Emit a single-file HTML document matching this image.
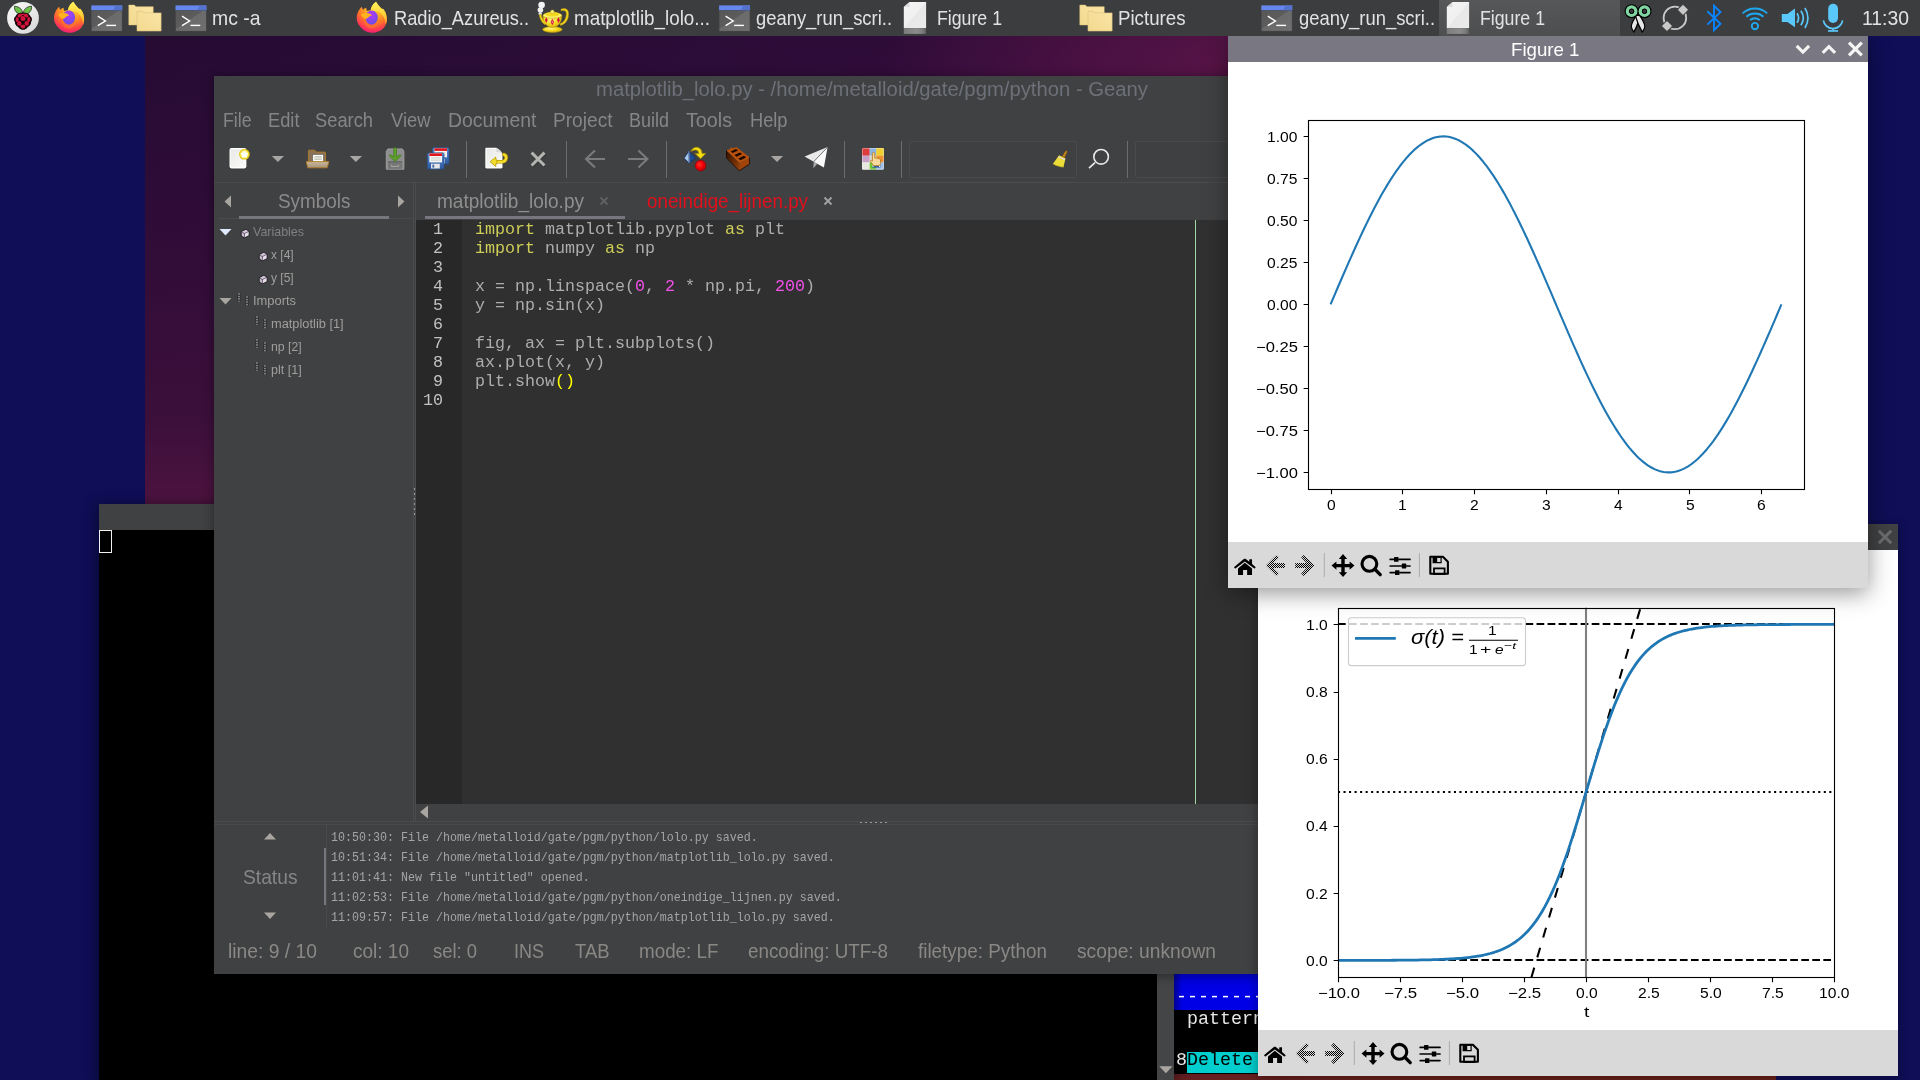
<!DOCTYPE html>
<html><head><meta charset="utf-8"><title>desktop</title>
<style>
*{box-sizing:border-box;margin:0;padding:0}
html,body{width:1920px;height:1080px;overflow:hidden;background:#0f0e57;font-family:"Liberation Sans",sans-serif}
.a{position:absolute}
.t{position:absolute;white-space:pre;transform-origin:0 0;display:block}
svg{position:absolute;overflow:visible}
#wall{left:145px;top:36px;width:1631px;height:1044px;
 background:
  radial-gradient(ellipse 380px 150px at 1120px 30px, rgba(112,24,80,.7), rgba(112,24,80,0) 100%),
  linear-gradient(90deg, rgba(60,14,80,0) 0px, rgba(70,16,80,.12) 500px, rgba(84,18,76,.25) 900px, rgba(80,18,80,0) 1300px),
  linear-gradient(180deg,#260b33 0px,#2d0c37 150px,#3b0f3a 380px,#4d1340 470px,#561440 700px,#5e1c1c 1030px,#6a2218 1044px);}
#tb{left:0;top:0;width:1920px;height:36px;background:#3c3d3f}
</style></head><body>
<div id="root" class="a" style="left:0;top:0;width:1920px;height:1080px;will-change:transform;overflow:hidden">
<div id="wall" class="a"></div>
<svg width="0" height="0" style="left:0;top:0">
<defs>
<pattern id="dith" width="2" height="2" patternUnits="userSpaceOnUse"><rect width="1" height="1" fill="#000"/><rect x="1" y="1" width="1" height="1" fill="#000"/></pattern>
<g id="mpltb">
 <!-- home -->
 <path d="M16.84 16.7c.4 0 .7.2 1 .4l3.400 2.700V17.700c0-.3.200-.5.500-.5h1.800c.3 0 .5.200.5.500v4.400l3.200 2.600c.5.400.3.900 0 1.300-.4.500-.9.500-1.300.2L16.840 19.400 7.800 26.200c-.4.300-.9.300-1.300-.2-.3-.4-.5-.9 0-1.300l9.300-7.600c.3-.2.600-.4 1.040-.4z" fill="#000"/>
 <path d="M16.84 20.800l6.900 5.500c.2.200.3.300.3.600v5.500c0 .4-.3.700-.7.700h-4.200v-5h-4.100v5H10.700c-.4 0-.7-.3-.7-.7v-5.500c0-.3.100-.4.300-.6z" fill="#000"/>
 <!-- back -->
 <path d="M37.9 23.4L48.5 12.9l2.500 2.500-5.500 5.500H57v5H45.500l5.500 5.500-2.500 2.500z" fill="url(#dith)"/>
 <!-- forward -->
 <path d="M86.300 23.400L75.700 12.900l-2.500 2.500 5.500 5.500H67.200v5h11.500l-5.500 5.500 2.500 2.500z" fill="url(#dith)"/>
 <rect x="95.8" y="11" width="1" height="24" fill="#ababab"/>
 <!-- pan -->
 <path d="M115 12.1l4.2 4.9h-2.5v4.9h4.9v-2.5l4.9 4.2-4.9 4.2v-2.5h-4.9v4.9h2.5l-4.2 4.9-4.2-4.9h2.5v-4.9h-4.9v2.5l-4.9-4.2 4.9-4.2v2.5h4.9v-4.9h-2.5z" fill="#000"/>
 <!-- zoom -->
 <circle cx="141.4" cy="21.8" r="7.4" fill="none" stroke="#000" stroke-width="3.1"/>
 <path d="M146.9 27.3l5.3 5.3" stroke="#000" stroke-width="3.4" stroke-linecap="round"/>
 <!-- sliders -->
 <path d="M162.2 17.4h3.3m5.4 0h11.1M162.2 24h11.1m5.5 0h3.2M162.2 30.6h4.3m5.5 0h10" stroke="#000" stroke-width="1.7" fill="none" stroke-linecap="round"/>
 <rect x="166" y="15" width="4.5" height="4.8" rx=".6" fill="#000"/><rect x="173.8" y="21.6" width="4.5" height="4.8" rx=".6" fill="#000"/><rect x="167" y="28.2" width="4.5" height="4.8" rx=".6" fill="#000"/>
 <rect x="190.9" y="11" width="1" height="24" fill="#ababab"/>
 <!-- save -->
 <path d="M202.3 14.8h12.6l5 5v12h-17.6z" fill="none" stroke="#000" stroke-width="2.1" stroke-linejoin="round"/>
 <path d="M204.6 14.8h9.1v6.5h-9.1zM209.2 15.7v4.2h3.3v-4.2z" fill="#000" fill-rule="evenodd"/>
 <rect x="206" y="26.4" width="10.6" height="5.6" fill="none" stroke="#000" stroke-width="1.8"/>
</g>
</defs></svg>
<svg width="0" height="0" style="left:0;top:0">
<defs>
<linearGradient id="gcirc" x1="0" y1="0" x2="1" y2="1"><stop offset="0" stop-color="#f6f6f6"/><stop offset=".5" stop-color="#ebebeb"/><stop offset="1" stop-color="#d4d4d4"/></linearGradient>
<radialGradient id="ffbody" cx=".6" cy=".12" r="1"><stop offset="0" stop-color="#ffe14a"/><stop offset=".3" stop-color="#ffb029"/><stop offset=".55" stop-color="#ff7a26"/><stop offset=".76" stop-color="#ff3d4e"/><stop offset=".95" stop-color="#f0108a"/></radialGradient>
<radialGradient id="ffglobe" cx=".45" cy=".3" r=".8"><stop offset="0" stop-color="#b43cf0"/><stop offset=".5" stop-color="#8a45f0"/><stop offset="1" stop-color="#5b52e0"/></radialGradient>
<linearGradient id="ffflame" x1="0" y1="0" x2="0" y2="1"><stop offset="0" stop-color="#fff45e"/><stop offset=".55" stop-color="#ffd23a"/><stop offset="1" stop-color="#ff9a24"/></linearGradient>
<linearGradient id="gterm" x1="0" y1="0" x2="1" y2="1"><stop offset="0" stop-color="#585858"/><stop offset=".44" stop-color="#5c5c5c"/><stop offset=".45" stop-color="#6b6b6b"/><stop offset="1" stop-color="#6f6f6f"/></linearGradient>
<linearGradient id="gfold" x1="0" y1="1" x2="1" y2="0"><stop offset="0" stop-color="#f3d98f"/><stop offset="1" stop-color="#fae5a6"/></linearGradient>
<linearGradient id="gdocrefl" x1="0" y1="0" x2="1" y2="0"><stop offset="0" stop-color="#7c7c7c"/><stop offset=".6" stop-color="#8c8c8c"/><stop offset=".85" stop-color="#7a7a7a"/><stop offset="1" stop-color="#5c5d5e"/></linearGradient>
<linearGradient id="gdoc" x1="0" y1="0" x2="1" y2="1"><stop offset="0" stop-color="#f4f4f4"/><stop offset=".5" stop-color="#f0f0f0"/><stop offset=".51" stop-color="#e8e8e8"/><stop offset="1" stop-color="#ebebeb"/></linearGradient>
<radialGradient id="ggold" cx=".4" cy=".35" r=".75"><stop offset="0" stop-color="#fff689"/><stop offset=".5" stop-color="#f5d91e"/><stop offset="1" stop-color="#c9a30c"/></radialGradient>

<!-- raspberry menu: 36x36 box, circle centre 18,18 (placed so centre at 23,18) -->
<g id="i-rpi">
 <circle cx="18" cy="18" r="15.9" fill="url(#gcirc)"/>
 <path d="M17.700 13.400C17.400 9.500 14.600 6.700 9.500 6.300 9 10.600 11.500 13.900 16.200 14.200z" fill="#6cc04a" stroke="#1a1a1a" stroke-width=".7"/>
 <path d="M18.300 13.400C18.600 9.500 21.400 6.700 26.500 6.300 27 10.600 24.500 13.900 19.800 14.200z" fill="#6cc04a" stroke="#1a1a1a" stroke-width=".7"/>
 <path d="M18 12.600c4.200 0 6.700 1.700 7.400 3.700 1.900 1.300 2.100 4 .7 5.800.1 2.300-1.500 4.200-3.300 4.900-1 1.700-3 2.900-4.800 2.900s-3.800-1.200-4.800-2.900c-1.800-.7-3.400-2.600-3.300-4.900-1.400-1.800-1.200-4.500.7-5.800.7-2 3.200-3.700 7.400-3.700z" fill="#14060a"/>
 <g fill="#d2143c">
  <ellipse cx="14.800" cy="15.600" rx="2.400" ry="1.700" transform="rotate(-25 14.800 15.600)"/><ellipse cx="21.200" cy="15.600" rx="2.400" ry="1.700" transform="rotate(25 21.200 15.600)"/>
  <circle cx="18" cy="18.600" r="2.500"/>
  <ellipse cx="12.200" cy="19.700" rx="1.600" ry="2.500"/><ellipse cx="23.800" cy="19.700" rx="1.600" ry="2.500"/>
  <ellipse cx="14.300" cy="23.500" rx="2.200" ry="2.400"/><ellipse cx="21.700" cy="23.500" rx="2.200" ry="2.400"/>
  <ellipse cx="18" cy="26.700" rx="2.400" ry="2"/>
  <ellipse cx="18" cy="14.500" rx="1.300" ry=".9"/>
 </g>
</g>

<!-- firefox: 32x32, origin top-left of icon bbox (x 54..84, y 2..33) -->
<g id="i-ff">
 <path d="M19.500 -.2C21 2.600 23.500 5 25.500 7l.9-.2C28 8.200 29.800 11.500 30.200 15.300 30.600 19 30 21 29.200 22.700 27.500 26.500 25 28 22.900 29 20 30.500 17.500 30.900 14.900 30.800 11 30.600 8 29 6.200 27.300 2.500 24 .3 20.500 .2 16.700 .1 14 .6 12 1.500 10 2.400 8 3.800 6.200 5.400 4.800 5.600 6 6 7 6.500 7.800 7.400 6.900 8.500 6.200 9.700 5.800 9.800 7 10.100 8.100 10.500 9 12 8.400 13.500 8 14.400 8.200V7C15 4.500 17 1.500 19.500 -.2z" fill="url(#ffbody)"/>
 <path d="M19.500 -.2C21 2.600 23.500 5 25.500 7l.9-.2C28 8.200 29.800 11.500 30.200 15.300 30.500 18.500 30 21 29.200 22.700 29 18 27 13.500 24 11 22.500 9.700 20.500 9 19.500 9.300 18 8.400 16 8 14.400 8.200V7C15 4.500 17 1.500 19.500 -.2z" fill="url(#ffflame)"/>
 <ellipse cx="15.100" cy="15.600" rx="6.200" ry="7.100" fill="url(#ffglobe)"/>
 <path d="M4.200 12.700C6 11.200 9 10.700 11 11.300 12.500 10.800 14 11.800 15.400 13.500 13.800 13.600 12.600 14.400 12 15.300 10.800 16.200 9.800 16.900 8.900 16.900 7 16.500 5.500 14 4.200 12.700z" fill="#ffb21e"/>
 <path d="M8.700 16.900c.3 3.700 3.100 6.300 6.700 6.300 3.200 0 5.900-2.100 6.700-5.200.6 4.200-2.300 8.600-7.300 8.600-4.900 0-7.600-4.800-6.100-9.700z" fill="#ff7a2a" opacity=".55"/>
</g>

<!-- terminal: 32x26, origin at (x0, 5.400) -->
<g id="i-term">
 <rect x="0" y="0" width="31.500" height="26.100" rx="1" fill="#47474a"/>
 <rect x=".3" y="0" width="30.900" height="4.800" fill="#6587ee"/>
 <path d="M22 4.800L24.600 0h6.600v4.800z" fill="#5573cc"/>
 <rect x=".7" y="5.600" width="30.100" height="19.900" fill="url(#gterm)"/>
 <path d="M6.800 10.800l7.600 4.800-7.600 4.700" fill="none" stroke="#fff" stroke-width="1.400"/>
 <path d="M15.300 20h9.800" stroke="#fff" stroke-width="1.400"/>
</g>

<!-- folder: 33x26 origin (x0,5) -->
<g id="i-fold">
 <path d="M0 .1h5.600l1.500 1.600H24.400V19.900H0z" fill="url(#gfold)" stroke="#e3c77d" stroke-width=".5"/>
 <path d="M8.200 6.400h5.200l1.500 1.500H32.300V26H8.200z" fill="url(#gfold)" stroke="#dcc078" stroke-width=".6"/>
</g>

<!-- doc: 23x32 origin (x0, 1.900) -->
<g id="i-doc">
 <rect x="0" y="26.200" width="22.300" height="5.800" fill="url(#gdocrefl)"/>
 <path d="M5.700 0H22.300V26.200H0V5.100z" fill="url(#gdoc)"/>
 <path d="M5.700 0v5.100H0z" fill="#dcdcdc"/>
</g>

<!-- geany lamp: origin at (537,2), ~32x32 -->
<g id="i-lamp">
 <circle cx="4.600" cy="3.100" r="3.300" fill="#f4f4f4"/><circle cx="3.400" cy="8" r="2.800" fill="#efefef"/><circle cx="3.200" cy="11.800" r="1.700" fill="#e4e6f4"/>
 <path d="M2.200 12.600c.4 3.500 2 7.300 5.600 10.200l1.800-2.200c-3-1.700-4.900-4.600-5.600-8.300z" fill="#f1d41d" stroke="#b8960a" stroke-width=".5"/>
 <path d="M23.800 7.300c3.400-1.800 7.400-.6 7.700 3.400.4 6.200-2.300 11.200-8 12.700l-.5-1.700c4.400-1.500 6.300-5.800 6.300-10.300 0-2.600-2.400-3.400-4.900-2.400z" fill="#f1d41d" stroke="#b8960a" stroke-width=".5"/>
 <ellipse cx="15.400" cy="27.500" rx="9.800" ry="2.900" fill="url(#ggold)" stroke="#b8960a" stroke-width=".5"/>
 <path d="M6 13.500c0 7 4 12 9.400 12s9.400-5 9.400-12z" fill="url(#ggold)" stroke="#b8960a" stroke-width=".5"/>
 <ellipse cx="15.400" cy="13.300" rx="9.400" ry="3" fill="#fff27a" stroke="#b8960a" stroke-width=".5"/>
 <ellipse cx="15.400" cy="12.300" rx="7" ry="2.300" fill="#f5d91e"/>
 <circle cx="15.400" cy="9.800" r="1.900" fill="#fff27a" stroke="#b8960a" stroke-width=".5"/>
 <path d="M9.300 15.300l1.500 2.800-1.500 2.800-1.400-2.800zM15.300 16.800l1.700 3.200-1.700 3.200-1.700-3.200zM21.500 15.300l1.400 2.800-1.400 2.800-1.500-2.800z" fill="#d4143c"/>
 <circle cx="15.300" cy="20" r=".7" fill="#ffc0d0"/>
</g>

<!-- tray icons (absolute page coords) -->
<g id="i-tray">
 <!-- clipit -->
 <path d="M1640.400 15.500L1636.500 15.200C1634 19 1631.200 23.200 1631.300 26.500c.1 1.800 1.300 3.600 2.500 5.600 1.500-2.600 2.900-5.400 3.700-8.100z" fill="#e6e6e6" stroke="#000" stroke-width="1.200" stroke-linejoin="round"/>
 <path d="M1635.700 15.500L1639.600 15.200C1642.100 19 1644.900 23.200 1644.800 26.500c-.1 1.800-1.300 3.600-2.500 5.600-2.400-4.200-4.900-9.400-6.200-14.100z" fill="#e6e6e6" stroke="#000" stroke-width="1.200" stroke-linejoin="round"/>
 <circle cx="1631.600" cy="11.200" r="4.300" fill="none" stroke="#000" stroke-width="5.400"/><circle cx="1644.500" cy="11.200" r="4.300" fill="none" stroke="#000" stroke-width="5.400"/>
 <circle cx="1631.600" cy="11.200" r="4.200" fill="none" stroke="#7fd4a0" stroke-width="3.400"/><circle cx="1644.500" cy="11.200" r="4.200" fill="none" stroke="#7fd4a0" stroke-width="3.400"/>
 <circle cx="1631.600" cy="11.200" r="2.200" fill="#3a3b3d" stroke="#000" stroke-width="1"/><circle cx="1644.500" cy="11.200" r="2.200" fill="#3a3b3d" stroke="#000" stroke-width="1"/>
 <!-- sync -->
 <circle cx="1674.900" cy="17.900" r="11.300" fill="none" stroke="#c9c9c9" stroke-width="1.800"/>
 <rect x="1678.900" y="5.700" width="8.200" height="8.200" rx="1.200" transform="rotate(45 1683 9.800)" fill="#c9c9c9" stroke="#3c3d3f" stroke-width="1"/>
 <rect x="1662.900" y="21.900" width="8.200" height="8.200" rx="1.200" transform="rotate(45 1667 26)" fill="#c9c9c9" stroke="#3c3d3f" stroke-width="1"/>
 <!-- bluetooth -->
 <path d="M1707.300 11.300l13.200 12.500-6.500 6.400V5.700l6.500 6.400-13.200 12.500" fill="none" stroke="#0a84ff" stroke-width="1.900" stroke-linejoin="miter"/>
 <!-- wifi -->
 <g fill="none" stroke="#1ea8f0" stroke-width="1.900" stroke-linecap="butt">
  <circle cx="1754.900" cy="26.100" r="3.200"/>
  <path d="M1742.600 13.400a18 18 0 0 1 24.600 0"/>
  <path d="M1746.300 16.700a13 13 0 0 1 17.200 0"/>
  <path d="M1750 20.100a8 8 0 0 1 9.800 0"/>
 </g>
 <!-- volume -->
 <path d="M1781.800 13.900h5.600l7.600-5.300v18.600l-7.600-5.300h-5.600z" fill="#5ac8fa"/>
 <g fill="none" stroke="#5ac8fa" stroke-width="1.700">
  <path d="M1797 13.300a8.400 8.400 0 0 1 0 9.400"/>
  <path d="M1800.900 10.700a13.100 13.100 0 0 1 0 14.600"/>
  <path d="M1804.900 8a18 18 0 0 1 0 20"/>
 </g>
 <!-- mic -->
 <rect x="1828.200" y="3.700" width="9.800" height="19.300" rx="4.900" fill="#5ac8fa"/>
 <path d="M1823.400 20.300a9.700 9.700 0 0 0 19.200 0" fill="none" stroke="#5ac8fa" stroke-width="1.700"/>
 <path d="M1833 28v2.600" stroke="#5ac8fa" stroke-width="1.700"/>
 <rect x="1828" y="30.100" width="10.100" height="1.700" fill="#5ac8fa"/>
</g>
</defs></svg>
<!-- terminal 1 (big black) -->
<div class="a" style="left:99px;top:504px;width:1075px;height:576px;background:#000;box-shadow:0 3px 14px 2px rgba(0,0,0,.45)">
 <div class="a" style="left:0;top:0;width:1075px;height:26px;background:#404142"></div>
 <div class="a" style="left:0;top:26px;width:13px;height:23px;border:1px solid #f2f2f2"></div>
 <div class="a" style="left:1058px;top:26px;width:17px;height:550px;background:#444546"></div>
 <svg style="left:1059.500px;top:562px" width="14" height="8" viewBox="0 0 14 8"><path d="M.3 .3h13.200L6.900 7.300z" fill="#a9a6a2"/></svg>
</div>
<!-- terminal 2 (mc) -->
<div class="a" style="left:1174px;top:940px;width:200px;height:134px;background:#000;overflow:hidden">
 <div class="a" style="left:0;top:0;width:200px;height:70px;background:#0000e6"></div>
 <div class="a" style="left:0;top:0;width:8px;height:70px;background:linear-gradient(90deg,rgba(0,0,40,.45),rgba(0,0,40,0))"></div>
 <span class="t" style="left:2.00px;top:49.45px;font:normal normal 18.33px/1 'Liberation Mono',monospace;color:#ffffff;transform:scaleX(0.9999);">----------------</span>
 <span class="t" style="left:2.00px;top:71.35px;font:normal normal 18.33px/1 'Liberation Mono',monospace;color:#e6e6e6;transform:scaleX(0.9999);"> pattern</span>
 <div class="a" style="left:13px;top:112px;width:187px;height:21px;background:#00cdcd"></div>
 <span class="t" style="left:2.00px;top:111.55px;font:normal normal 18.33px/1 'Liberation Mono',monospace;color:#e6e6e6;transform:scaleX(0.9999);">8</span>
 <span class="t" style="left:13.00px;top:111.55px;font:normal normal 18.33px/1 'Liberation Mono',monospace;color:#000000;transform:scaleX(0.9999);">Delete</span>
</div>
<!-- Geany window -->
<div class="a" style="left:214px;top:76px;width:1314px;height:898px;background:#404142;box-shadow:0 2px 10px 1px rgba(0,0,0,.35)"></div>
<span class="t" style="left:595.50px;top:79.37px;font:normal normal 20.00px/1 'Liberation Sans',sans-serif;color:#6d7078;transform:scaleX(1.0133);">matplotlib_lolo.py - /home/metalloid/gate/pgm/python - Geany</span>
<!-- menubar -->
<span class="t" style="left:222.50px;top:109.85px;font:normal normal 20.50px/1 'Liberation Sans',sans-serif;color:#858687;transform:scaleX(0.8628);">File</span>
<span class="t" style="left:267.50px;top:109.85px;font:normal normal 20.50px/1 'Liberation Sans',sans-serif;color:#858687;transform:scaleX(0.8917);">Edit</span>
<span class="t" style="left:315.00px;top:109.85px;font:normal normal 20.50px/1 'Liberation Sans',sans-serif;color:#858687;transform:scaleX(0.8929);">Search</span>
<span class="t" style="left:390.50px;top:109.85px;font:normal normal 20.50px/1 'Liberation Sans',sans-serif;color:#858687;transform:scaleX(0.8964);">View</span>
<span class="t" style="left:447.50px;top:109.85px;font:normal normal 20.50px/1 'Liberation Sans',sans-serif;color:#858687;transform:scaleX(0.9472);">Document</span>
<span class="t" style="left:552.50px;top:109.85px;font:normal normal 20.50px/1 'Liberation Sans',sans-serif;color:#858687;transform:scaleX(0.9325);">Project</span>
<span class="t" style="left:628.70px;top:109.85px;font:normal normal 20.50px/1 'Liberation Sans',sans-serif;color:#858687;transform:scaleX(0.8774);">Build</span>
<span class="t" style="left:686.00px;top:109.85px;font:normal normal 20.50px/1 'Liberation Sans',sans-serif;color:#858687;transform:scaleX(0.9612);">Tools</span>
<span class="t" style="left:749.50px;top:109.85px;font:normal normal 20.50px/1 'Liberation Sans',sans-serif;color:#858687;transform:scaleX(0.8894);">Help</span>
<!-- toolbar separators / entries -->
<div class="a" style="left:466px;top:141px;width:1px;height:37px;background:#6c6d6e"></div>
<div class="a" style="left:566px;top:141px;width:1px;height:37px;background:#6c6d6e"></div>
<div class="a" style="left:666px;top:141px;width:1px;height:37px;background:#6c6d6e"></div>
<div class="a" style="left:844px;top:141px;width:1px;height:37px;background:#6c6d6e"></div>
<div class="a" style="left:901px;top:141px;width:1px;height:37px;background:#6c6d6e"></div>
<div class="a" style="left:1127px;top:141px;width:1px;height:37px;background:#6c6d6e"></div>
<div class="a" style="left:909px;top:141px;width:168px;height:37px;border:1px solid #494a4b;border-radius:2px;background:#3f4041"></div>
<div class="a" style="left:1135px;top:141px;width:168px;height:37px;border:1px solid #494a4b;border-radius:2px;background:#3f4041"></div>
<div class="a" style="left:214px;top:182px;width:1314px;height:1px;background:#4a4b4c"></div>
<!-- sidebar -->
<div class="a" style="left:413px;top:183px;width:1px;height:638px;background:#4a4b4c"></div>
<div class="a" style="left:415px;top:183px;width:1px;height:638px;background:#4a4b4c"></div>
<div class="a" style="left:218px;top:218px;width:196px;height:1px;background:#4a4b4c"></div>
<span class="t" style="left:277.50px;top:190.22px;font:normal normal 21.00px/1 'Liberation Sans',sans-serif;color:#8b8b8b;transform:scaleX(0.9003);">Symbols</span>
<div class="a" style="left:239px;top:216px;width:150px;height:3px;background:#77767f"></div>
<svg style="left:224px;top:195px" width="8" height="13" viewBox="0 0 8 13"><path d="M7 0.5v12L0.5 6.5z" fill="#a9a6a2"/></svg>
<svg style="left:397px;top:195px" width="8" height="13" viewBox="0 0 8 13"><path d="M1 0.5v12l6.5-6z" fill="#a9a6a2"/></svg>
<!-- editor tabs -->
<span class="t" style="left:437.00px;top:190.22px;font:normal normal 21.00px/1 'Liberation Sans',sans-serif;color:#8f8f8f;transform:scaleX(0.9059);">matplotlib_lolo.py</span>
<div class="a" style="left:425px;top:216px;width:200px;height:3px;background:#77767f"></div>
<span class="t" style="left:647.00px;top:190.22px;font:normal normal 21.00px/1 'Liberation Sans',sans-serif;color:#e20f1c;transform:scaleX(0.8953);">oneindige_lijnen.py</span>
<svg style="left:599px;top:196px" width="10" height="10" viewBox="0 0 10 10"><path d="M1.5 1.5l7 7M8.5 1.5l-7 7" stroke="#606162" stroke-width="1.8" fill="none"/></svg>
<svg style="left:823px;top:196px" width="10" height="10" viewBox="0 0 10 10"><path d="M1.5 1.5l7 7M8.5 1.5l-7 7" stroke="#a3a3a3" stroke-width="1.8" fill="none"/></svg>
<!-- tree -->
<svg style="left:219px;top:228px" width="13" height="8" viewBox="0 0 13 8"><path d="M0.5 1h12l-6 6.5z" fill="#dfe9ff"/></svg>
<svg style="left:219px;top:297px" width="13" height="8" viewBox="0 0 13 8"><path d="M0.5 1h12l-6 6.5z" fill="#a9a6a2"/></svg>
<span class="t" style="left:253.00px;top:224.54px;font:normal normal 13.30px/1 'Liberation Sans',sans-serif;color:#808182;transform:scaleX(0.9364);">Variables</span>
<span class="t" style="left:271.30px;top:247.74px;font:normal normal 13.30px/1 'Liberation Sans',sans-serif;color:#a09f9d;transform:scaleX(0.9032);">x [4]</span>
<span class="t" style="left:271.30px;top:270.74px;font:normal normal 13.30px/1 'Liberation Sans',sans-serif;color:#a09f9d;transform:scaleX(0.9032);">y [5]</span>
<span class="t" style="left:253.00px;top:293.74px;font:normal normal 13.30px/1 'Liberation Sans',sans-serif;color:#a09f9d;transform:scaleX(0.9697);">Imports</span>
<span class="t" style="left:271.30px;top:316.74px;font:normal normal 13.30px/1 'Liberation Sans',sans-serif;color:#a09f9d;transform:scaleX(0.9641);">matplotlib [1]</span>
<span class="t" style="left:271.30px;top:339.74px;font:normal normal 13.30px/1 'Liberation Sans',sans-serif;color:#a09f9d;transform:scaleX(0.9226);">np [2]</span>
<span class="t" style="left:271.30px;top:362.74px;font:normal normal 13.30px/1 'Liberation Sans',sans-serif;color:#a09f9d;transform:scaleX(0.9438);">plt [1]</span>
<!-- editor -->
<div class="a" style="left:416px;top:220px;width:1112px;height:584px;background:#303030"></div>
<div class="a" style="left:416px;top:220px;width:46px;height:584px;background:#282828"></div>
<div class="a" style="left:1195px;top:220px;width:1px;height:584px;background:#9fd9a8"></div>
<pre class="a" id="ln" style="left:423px;top:220px;width:20px;text-align:right;font:16.667px/19px 'Liberation Mono',monospace;color:#c2c2c2;padding-top:0px">1
2
3
4
5
6
7
8
9
10</pre>
<pre class="a" id="code" style="left:475px;top:220px;font:16.667px/19px 'Liberation Mono',monospace;color:#adadad"><span class="k">import</span> matplotlib.pyplot <span class="k">as</span> plt
<span class="k">import</span> numpy <span class="k">as</span> np

x = np.linspace(<span class="n">0</span>, <span class="n">2</span> * np.pi, <span class="n">200</span>)
y = np.sin(x)

fig, ax = plt.subplots()
ax.plot(x, y)
plt.show<span class="b">()</span>
</pre>
<style>#code .k{color:#cdcd58}#code .n{color:#f450ea}#code .b{color:#ffff00}</style>
<!-- h scrollbar -->
<svg style="left:419px;top:805px" width="10" height="14" viewBox="0 0 10 14"><path d="M9 0.5v13L1 7z" fill="#a9a6a2"/></svg>
<div class="a" style="left:214px;top:821px;width:1314px;height:1px;background:#4a4b4c"></div>
<div class="a" style="left:860px;top:822px;width:28px;height:1px;background:repeating-linear-gradient(90deg,#9a9a9a 0 2px,transparent 2px 5px)"></div>
<div class="a" style="left:414px;top:488px;width:1px;height:28px;background:repeating-linear-gradient(180deg,#9a9a9a 0 2px,transparent 2px 5px)"></div>
<!-- messages -->
<div class="a" style="left:214px;top:824px;width:1314px;height:1px;background:#48494a"></div>
<svg style="left:263px;top:832px" width="14" height="8" viewBox="0 0 14 8"><path d="M1 7.5h12L7 1z" fill="#a9a6a2"/></svg>
<svg style="left:263px;top:912px" width="14" height="8" viewBox="0 0 14 8"><path d="M1 0.5h12L7 7z" fill="#a9a6a2"/></svg>
<span class="t" style="left:243.00px;top:865.92px;font:normal normal 21.00px/1 'Liberation Sans',sans-serif;color:#858687;transform:scaleX(0.9154);">Status</span>
<div class="a" style="left:324px;top:848px;width:3px;height:57px;background:#77767f"></div>
<div class="a" style="left:326px;top:824px;width:1px;height:104px;background:#4a4b4c"></div>
<pre class="a" id="msg" style="left:331px;top:828.4px;font:11.667px/18.52px 'Liberation Mono',monospace;color:#a5a5a5;transform:scaleY(1.08);transform-origin:0 0">10:50:30: File /home/metalloid/gate/pgm/python/lolo.py saved.
10:51:34: File /home/metalloid/gate/pgm/python/matplotlib_lolo.py saved.
11:01:41: New file "untitled" opened.
11:02:53: File /home/metalloid/gate/pgm/python/oneindige_lijnen.py saved.
11:09:57: File /home/metalloid/gate/pgm/python/matplotlib_lolo.py saved.</pre>
<!-- statusbar -->
<span class="t" style="left:228.00px;top:940.65px;font:normal normal 20.50px/1 'Liberation Sans',sans-serif;color:#8a8885;transform:scaleX(0.9409);">line: 9 / 10</span>
<span class="t" style="left:353.00px;top:940.65px;font:normal normal 20.50px/1 'Liberation Sans',sans-serif;color:#8a8885;transform:scaleX(0.9272);">col: 10</span>
<span class="t" style="left:433.00px;top:940.65px;font:normal normal 20.50px/1 'Liberation Sans',sans-serif;color:#8a8885;transform:scaleX(0.8980);">sel: 0</span>
<span class="t" style="left:514.00px;top:940.65px;font:normal normal 20.50px/1 'Liberation Sans',sans-serif;color:#8a8885;transform:scaleX(0.8779);">INS</span>
<span class="t" style="left:574.50px;top:940.65px;font:normal normal 20.50px/1 'Liberation Sans',sans-serif;color:#8a8885;transform:scaleX(0.8996);">TAB</span>
<span class="t" style="left:639.00px;top:940.65px;font:normal normal 20.50px/1 'Liberation Sans',sans-serif;color:#8a8885;transform:scaleX(0.9181);">mode: LF</span>
<span class="t" style="left:748.00px;top:940.65px;font:normal normal 20.50px/1 'Liberation Sans',sans-serif;color:#8a8885;transform:scaleX(0.9169);">encoding: UTF-8</span>
<span class="t" style="left:918.00px;top:940.65px;font:normal normal 20.50px/1 'Liberation Sans',sans-serif;color:#8a8885;transform:scaleX(0.9203);">filetype: Python</span>
<span class="t" style="left:1077.00px;top:940.65px;font:normal normal 20.50px/1 'Liberation Sans',sans-serif;color:#8a8885;transform:scaleX(0.9382);">scope: unknown</span>
<svg style="left:0;top:0" width="1230" height="400" viewBox="0 0 1230 400">
<defs>
<linearGradient id="gpage" x1="0" y1="0" x2="1" y2="1"><stop offset="0" stop-color="#e9e9e7"/><stop offset=".6" stop-color="#f3f3f2"/><stop offset="1" stop-color="#fdfdfd"/></linearGradient>
<radialGradient id="gstar" cx=".5" cy=".5" r=".5"><stop offset="0" stop-color="#fff"/><stop offset=".55" stop-color="#fff9b0"/><stop offset=".8" stop-color="#ecd21a"/><stop offset="1" stop-color="#d8be10" stop-opacity=".75"/></radialGradient>
<linearGradient id="gflap" x1="0" y1="0" x2="0" y2="1"><stop offset="0" stop-color="#c9b99d"/><stop offset="1" stop-color="#a8947a"/></linearGradient>
<radialGradient id="gred" cx=".4" cy=".4" r=".6"><stop offset="0" stop-color="#ff3020"/><stop offset=".6" stop-color="#ee0008"/><stop offset="1" stop-color="#b80008"/></radialGradient>
<linearGradient id="gbrL" x1="0" y1="0" x2="1" y2="1"><stop offset="0" stop-color="#2c0f00"/><stop offset="1" stop-color="#9a4208"/></linearGradient>
<linearGradient id="gflop" x1="0" y1="0" x2="0" y2="1"><stop offset="0" stop-color="#5a8bd0"/><stop offset="1" stop-color="#2d5aa0"/></linearGradient>
<g id="ddarrow"><path d="M0 0h12.200l-6.100 6.200z" fill="#a9a5a2"/></g>
<g id="floppy">
 <rect x="0" y="0" width="16.600" height="16.200" rx="1.500" fill="url(#gflop)" stroke="#28508c" stroke-width=".8"/>
 <rect x="2" y=".5" width="12.600" height="9" fill="#f6f6f6"/>
 <rect x="2" y=".5" width="12.600" height="2.600" fill="#e2141c"/>
 <path d="M3.600 5h9.400M3.600 7.200h9.400" stroke="#c4c8c0" stroke-width=".9"/>
 <rect x="3.600" y="10.800" width="8.800" height="4.800" fill="#e6e6e6"/>
 <rect x="5" y="11.700" width="1.800" height="3" fill="#3c64a8"/>
</g>
</defs>
<!-- new -->
<rect x="229.200" y="148.600" width="17.600" height="20.600" rx="2" fill="#2e2f30" opacity=".6"/>
<rect x="229.500" y="148.100" width="16.900" height="20.300" rx="1.800" fill="#fff"/>
<rect x="230.600" y="149.200" width="14.700" height="18.100" rx="1" fill="url(#gpage)"/>
<circle cx="244.400" cy="154.300" r="5.500" fill="url(#gstar)"/>
<path d="M244.400 150.500l1.200 2.400 2.700.4-2 1.900.5 2.700-2.400-1.300-2.400 1.300.5-2.700-2-1.900 2.700-.4z" fill="#fff"/>
<use href="#ddarrow" x="271.800" y="155.900"/>
<!-- open -->
<path d="M308.400 162v-11.200c0-.4.300-.6.700-.6h5.300c.5 0 .7.300 1 .7l.9 1.200h8.600c.4 0 .7.300.7.700V162z" fill="#8a7256" stroke="#b07c24" stroke-width=".9"/>
<rect x="312.800" y="154.600" width="10.500" height="8" fill="#fff" stroke="#555" stroke-width=".5"/>
<path d="M314.300 156.900h7.500M314.300 159.100h7.500" stroke="#b4b8a8" stroke-width="1.100"/>
<path d="M306.300 161.600h22.600l-1.700 6.200h-19.400z" fill="url(#gflap)" stroke="#b07c24" stroke-width=".9" stroke-linejoin="round"/>
<use href="#ddarrow" x="349.800" y="155.900"/>
<!-- save -->
<path d="M386.300 169.200v-18l1.600-2.300h14.400l1.600 2.300v18z" fill="#8e8e8e" stroke="#a2a2a2" stroke-width=".9"/>
<path d="M388 161.800h14.200v7H388z" fill="#777"/>
<path d="M388 161.800h14.200" stroke="#555" stroke-width=".8"/>
<path d="M391.600 164.600v1.800h7v-1.800" fill="none" stroke="#a8a8a8" stroke-width="1"/>
<path d="M393.800 148.300c0-.7 2.700-.7 2.700 0v8.600l3-2.100c.8-.5 1.900.6 1.200 1.400l-5.500 5.400-5.600-5.400c-.7-.8.400-1.900 1.200-1.400l3 2.100z" fill="#5ea02a" stroke="#3f7a18" stroke-width=".7"/>
<!-- save all -->
<use href="#floppy" x="432.400" y="147.800"/>
<use href="#floppy" x="427.400" y="152.900"/>
<!-- revert -->
<path d="M485.700 148.800h11.600l5.700 5.600v14.500h-17.300z" fill="#2e2f30" opacity=".55"/>
<path d="M485.300 149c0-.7.500-1.200 1.200-1.200h9.600c2.500.8 5.400 3.500 6.400 6.100v13.300c0 .7-.5 1.200-1.200 1.200h-14.800c-.7 0-1.200-.5-1.200-1.200z" fill="#fbfbfa"/>
<path d="M486.600 149.100h9.300c2 .9 4.400 3.100 5.400 5.200v12.800h-14.700z" fill="url(#gpage)"/>
<path d="M496.100 147.900c.5 1.300.4 3.100-.1 4.200 1.800-.5 4.400.2 6.400 1.800-1-2.600-3.800-5.200-6.300-6z" fill="#d8d8d6"/>
<path d="M503.800 154.600c1.900.4 2.600 2.200 2.300 3.900-.4 2.200-2 3.300-4.300 3.300h-6.500" fill="none" stroke="#b89a00" stroke-width="3.600" stroke-linecap="round"/>
<path d="M503.800 154.600c1.900.4 2.600 2.200 2.300 3.900-.4 2.200-2 3.300-4.300 3.300h-6.500" fill="none" stroke="#f4dc2e" stroke-width="2.200" stroke-linecap="round"/>
<path d="M495.800 157l-5.700 4.800 5.700 4.800v-2.900h1.200v-3.800h-1.200z" fill="#f4dc2e" stroke="#b89a00" stroke-width=".8" stroke-linejoin="round"/>
<!-- close -->
<path d="M531.800 153l12.500 12.500M544.300 153l-12.500 12.500" stroke="#2c2d2e" stroke-width="3.200" opacity=".5" transform="translate(.5 1)"/>
<path d="M531.600 152.600l12.900 12.900M544.500 152.600l-12.900 12.900" stroke="#b4b4b0" stroke-width="2.900" fill="none"/>
<!-- back / forward -->
<path d="M605 159h-19M595 150.500l-9 8.500 9 8.400" fill="none" stroke="#7b7b7b" stroke-width="2.100"/>
<path d="M628.100 159h19M638.400 150.500l9 8.500-9 8.400" fill="none" stroke="#7b7b7b" stroke-width="2.100"/>
<!-- compile -->
<path d="M688.900 151.200l-4.800 7.100 5.100 4.700z" fill="#a8c8f0" stroke="#0c2c64" stroke-width=".7" stroke-linejoin="round"/>
<path d="M688.900 151.200l6.700 7.100-6.400 4.700z" fill="#1c4c94" stroke="#0c2c64" stroke-width=".7" stroke-linejoin="round"/>
<path d="M688.900 151.200l.3 11.800" stroke="#fff" stroke-width=".6" opacity=".8"/>
<path d="M690.800 151.400c1.200-3 4.400-4.800 7.400-3.900 2.600.8 3.700 3.200 3.800 5.900h3.800l-5.300 5.400-5.400-5.400h3.500c0-1.600-.6-2.800-2-3.200-1.800-.5-3.700.2-5.800 1.200z" fill="#f2dc14" stroke="#a08a00" stroke-width=".7" stroke-linejoin="round"/>
<circle cx="700.600" cy="165.600" r="5.300" fill="url(#gred)" stroke="#a00008" stroke-width=".8"/>
<!-- brick -->
<path d="M726.500 150.200l12.800 12.100v8.500l-12.800-12.800z" fill="url(#gbrL)"/>
<path d="M739.300 162.300l10.200-5v6.700l-10.200 6.800z" fill="#a0440a"/>
<path d="M726.500 150.200l3.600-1 .6-1.700 2.500.8 2.300-.8.800-.4 13.200 10.200-10.200 5z" fill="#b8500c"/>
<path d="M730.600 151.400l5.400-2.300 2 1.500-5.400 2.500zM734.400 155l5.600-2.500 2.100 1.600-5.500 2.700zM738.300 158.500l5.700-2.700 2.100 1.600-5.700 2.900z" fill="#1a0800"/>
<path d="M726.500 150.200l12.800 12.100 10.200-5" fill="none" stroke="#e07a28" stroke-width=".5" opacity=".7"/>
<path d="M726.500 150.200v7.800l12.800 12.800 10.200-6.800v-6.700" fill="none" stroke="#1a0800" stroke-width=".8"/>
<use href="#ddarrow" x="770.900" y="155.900"/>
<!-- run (paper plane) -->
<path d="M813.700 161.700l3.500 2.300-3.900 4.200z" fill="#a9a9a9"/>
<path d="M804.600 156.600l23-9.500-13.900 14.600z" fill="#e9e9e9"/>
<path d="M827.600 147.100l-3.700 20.300-10.200-5.700z" fill="#fafafa"/>
<path d="M827.600 147.100l-13.900 14.600" stroke="#3c3c3c" stroke-width=".6"/>
<!-- color chooser -->
<rect x="862.100" y="148.100" width="21.700" height="21.400" rx="1.500" fill="#e8e8e0"/>
<rect x="862.100" y="148.100" width="7.600" height="7.600" fill="#dc3c3c"/><rect x="869.700" y="148.100" width="6.600" height="7.600" fill="#8cb4e0"/><rect x="876.300" y="148.100" width="7.500" height="7.600" fill="#f0d030"/>
<rect x="862.100" y="155.700" width="7.600" height="6.700" fill="#c8a0c8"/><rect x="869.700" y="155.700" width="6.600" height="6.700" fill="#d8d8d0"/><rect x="876.300" y="155.700" width="7.500" height="6.700" fill="#f09030"/>
<rect x="862.100" y="162.400" width="7.600" height="7.100" fill="#e8e8e0"/><rect x="869.700" y="162.400" width="6.600" height="7.100" fill="#70c830"/><rect x="876.300" y="162.400" width="7.500" height="7.100" fill="#a0c0e8"/>
<rect x="862.500" y="148.500" width="20.900" height="20.600" rx="1.300" fill="none" stroke="#fff" stroke-opacity=".35" stroke-width=".8"/>
<path d="M872.300 166.400h8" stroke="#2c5aa0" stroke-width="2.400"/>
<path d="M873 167v-1.800h6.500V167" stroke="#fff" stroke-width="1" fill="none"/>
<path d="M872.400 153.700c0-1.700 2.400-1.700 2.400 0v4.600c.5-.8 1.900-.7 2 .3.600-.7 1.900-.5 2 .5.700-.5 1.700-.2 1.700.9v2.600c0 1.500-.4 2.100-.9 3h-6.100c-.7-1.300-2.200-2.500-2.900-4-.4-1 .7-1.700 1.800-.6z" fill="#f7d9a0" stroke="#b4760c" stroke-width=".8" stroke-linejoin="round"/>
<!-- broom -->
<path d="M1062.300 156.300l3.300-5.300c.5-.8 1.900 0 1.500.9l-2.700 5.600z" fill="#c8861a" stroke="#8a5a10" stroke-width=".4"/>
<path d="M1059.100 155.200l6.400 3.100-2 8.800c-3.400-.4-8.400-1.800-10.500-3.400z" fill="#ecdc3a"/>
<path d="M1058.500 156.700l6.400 3" stroke="#e4d4e8" stroke-width="1.100"/>
<path d="M1053 163.700c2.100 1.600 7.100 3 10.500 3.400" fill="none" stroke="#c8b820" stroke-width=".8"/>
<!-- search -->
<circle cx="1101.100" cy="156.800" r="7.300" fill="none" stroke="#e9e9e9" stroke-width="1.600"/>
<path d="M1095 162.700l-6 5.500" stroke="#e9e9e9" stroke-width="1.700"/>
<!-- tree icons -->
<g id="cube"><path d="M.2 2.400l4.500-2.200 3.200 1.500v4.600l-4.500 2.200-3.200-1.700z" fill="#c4b4cc" stroke="#111" stroke-width=".8" stroke-linejoin="round"/><path d="M3.500 4.200l4-1.900v3.700l-4 2z" fill="#e6deea"/><path d="M.7 2.600l4-1.900 2.600 1.200-3.800 1.900z" fill="#d4c6da"/><path d="M.4 2.500l3.100 1.700v4M3.500 4.200l4.300-2.100" fill="none" stroke="#111" stroke-width=".5"/></g>
<use href="#cube" x="241" y="229.300"/><use href="#cube" x="259" y="252.300"/><use href="#cube" x="259" y="275.300"/>
<g id="impi"><path d="M1.500 0v8" stroke="#d8d8d8" stroke-width="2" stroke-dasharray="1.300 1.200"/><path d="M.6 0v8M2.400 0v8" stroke="#0a0a0a" stroke-width=".7" stroke-dasharray="1.800 .7"/><path d="M9.500 3v9" stroke="#d8d8d8" stroke-width="2" stroke-dasharray="1.300 1.200"/><path d="M8.600 3v9M10.400 3v9" stroke="#0a0a0a" stroke-width=".7" stroke-dasharray="1.800 .7"/></g>
<use href="#impi" x="237.500" y="293.500"/><use href="#impi" x="255.500" y="316.500"/><use href="#impi" x="255.500" y="339.500"/><use href="#impi" x="255.500" y="362.500"/>
</svg>
<!-- Figure 2 -->
<div class="a" style="left:1258px;top:524px;width:640px;height:552px;background:#fff;box-shadow:0 2px 10px 1px rgba(0,0,0,.3)"></div>
<div class="a" style="left:1258px;top:524px;width:640px;height:26px;background:#404142"></div>
<svg style="left:1878px;top:530px" width="14" height="14" viewBox="0 0 14 14"><path d="M.8 .8l12.400 12.400M13.200 .8L.8 13.200" stroke="#6b6c6d" stroke-width="3" fill="none"/></svg>
<svg style="left:0;top:0" width="1920" height="1080" viewBox="0 0 1920 1080"><defs><clipPath id="c2"><rect x="1338.00" y="607.60" width="496.00" height="369.60"/></clipPath></defs><g clip-path="url(#c2)" fill="none"><path d="M1338.00 960.00H1834.00" stroke="#000" stroke-width="2.08" stroke-dasharray="7.7 3.33"/><path d="M1338.00 624.00H1834.00" stroke="#000" stroke-width="2.08" stroke-dasharray="7.7 3.33"/><path d="M1338.00 792.00H1834.00" stroke="#000" stroke-width="2.08" stroke-dasharray="2.08 3.44"/><path d="M1586.00 607.60V977.20" stroke="#808080" stroke-width="2.08"/><path d="M1640.56 607.60L1531.44 977.20" stroke="#000" stroke-width="2.08" stroke-dasharray="10.1 10.66" stroke-dashoffset="19.09"/><polyline points="1338.00,960.38 1340.49,960.38 1342.98,960.38 1345.48,960.38 1347.97,960.38 1350.46,960.37 1352.95,960.37 1355.45,960.37 1357.94,960.37 1360.43,960.36 1362.92,960.36 1365.42,960.35 1367.91,960.35 1370.40,960.34 1372.89,960.34 1375.39,960.33 1377.88,960.32 1380.37,960.32 1382.86,960.31 1385.36,960.30 1387.85,960.29 1390.34,960.27 1392.83,960.26 1395.33,960.25 1397.82,960.23 1400.31,960.21 1402.80,960.19 1405.30,960.17 1407.79,960.15 1410.28,960.12 1412.77,960.09 1415.27,960.06 1417.76,960.02 1420.25,959.98 1422.74,959.94 1425.24,959.89 1427.73,959.83 1430.22,959.77 1432.71,959.71 1435.21,959.63 1437.70,959.55 1440.19,959.46 1442.68,959.36 1445.18,959.26 1447.67,959.13 1450.16,959.00 1452.65,958.85 1455.15,958.69 1457.64,958.51 1460.13,958.31 1462.62,958.09 1465.12,957.85 1467.61,957.59 1470.10,957.29 1472.59,956.97 1475.09,956.61 1477.58,956.21 1480.07,955.77 1482.56,955.29 1485.06,954.76 1487.55,954.18 1490.04,953.53 1492.53,952.82 1495.03,952.04 1497.52,951.18 1500.01,950.23 1502.50,949.20 1504.99,948.05 1507.49,946.80 1509.98,945.43 1512.47,943.92 1514.96,942.27 1517.46,940.47 1519.95,938.50 1522.44,936.35 1524.93,934.01 1527.43,931.46 1529.92,928.69 1532.41,925.68 1534.90,922.43 1537.40,918.91 1539.89,915.11 1542.38,911.03 1544.87,906.64 1547.37,901.95 1549.86,896.94 1552.35,891.60 1554.84,885.94 1557.34,879.95 1559.83,873.64 1562.32,867.02 1564.81,860.09 1567.31,852.88 1569.80,845.40 1572.29,837.68 1574.78,829.76 1577.28,821.65 1579.77,813.40 1582.26,805.04 1584.75,796.62 1587.25,788.18 1589.74,779.76 1592.23,771.40 1594.72,763.15 1597.22,755.04 1599.71,747.12 1602.20,739.40 1604.69,731.92 1607.19,724.71 1609.68,717.78 1612.17,711.16 1614.66,704.85 1617.16,698.86 1619.65,693.20 1622.14,687.86 1624.63,682.85 1627.13,678.16 1629.62,673.77 1632.11,669.69 1634.60,665.89 1637.10,662.37 1639.59,659.12 1642.08,656.11 1644.57,653.34 1647.07,650.79 1649.56,648.45 1652.05,646.30 1654.54,644.33 1657.04,642.53 1659.53,640.88 1662.02,639.37 1664.51,638.00 1667.01,636.75 1669.50,635.60 1671.99,634.57 1674.48,633.62 1676.97,632.76 1679.47,631.98 1681.96,631.27 1684.45,630.62 1686.94,630.04 1689.44,629.51 1691.93,629.03 1694.42,628.59 1696.91,628.19 1699.41,627.83 1701.90,627.51 1704.39,627.21 1706.88,626.95 1709.38,626.71 1711.87,626.49 1714.36,626.29 1716.85,626.11 1719.35,625.95 1721.84,625.80 1724.33,625.67 1726.82,625.54 1729.32,625.44 1731.81,625.34 1734.30,625.25 1736.79,625.17 1739.29,625.09 1741.78,625.03 1744.27,624.97 1746.76,624.91 1749.26,624.86 1751.75,624.82 1754.24,624.78 1756.73,624.74 1759.23,624.71 1761.72,624.68 1764.21,624.65 1766.70,624.63 1769.20,624.61 1771.69,624.59 1774.18,624.57 1776.67,624.55 1779.17,624.54 1781.66,624.53 1784.15,624.51 1786.64,624.50 1789.14,624.49 1791.63,624.48 1794.12,624.48 1796.61,624.47 1799.11,624.46 1801.60,624.46 1804.09,624.45 1806.58,624.45 1809.08,624.44 1811.57,624.44 1814.06,624.43 1816.55,624.43 1819.05,624.43 1821.54,624.43 1824.03,624.42 1826.52,624.42 1829.02,624.42 1831.51,624.42 1834.00,624.42" stroke="#1f77b4" stroke-width="2.78" stroke-linejoin="round"/></g><path d="M1338.50 977.50v4.86M1400.50 977.50v4.86M1462.50 977.50v4.86M1524.50 977.50v4.86M1586.50 977.50v4.86M1648.50 977.50v4.86M1710.50 977.50v4.86M1772.50 977.50v4.86M1834.50 977.50v4.86M1338.50 960.50h-4.86M1338.50 893.50h-4.86M1338.50 826.50h-4.86M1338.50 759.50h-4.86M1338.50 692.50h-4.86M1338.50 624.50h-4.86" stroke="#000" stroke-width="1.11" fill="none"/><rect x="1338.50" y="608.50" width="496.00" height="369.00" fill="none" stroke="#000" stroke-width="1.11"/><rect x="1348.5" y="617.8" width="177" height="47.8" rx="2.8" fill="#fff" fill-opacity=".8" stroke="#ccc" stroke-width="1.1"/><path d="M1355 638.3h40.8" stroke="#1f77b4" stroke-width="2.78"/><path d="M1469 640.3h49" stroke="#000" stroke-width="1.1"/></svg>
<span class="t" style="left:1317.54px;top:986.23px;font:normal normal 14.14px/1 'Liberation Sans',sans-serif;color:#000000;transform:scaleX(1.1716);">−10.0</span>
<span class="t" style="left:1383.89px;top:986.23px;font:normal normal 14.14px/1 'Liberation Sans',sans-serif;color:#000000;transform:scaleX(1.1901);">−7.5</span>
<span class="t" style="left:1445.89px;top:986.23px;font:normal normal 14.14px/1 'Liberation Sans',sans-serif;color:#000000;transform:scaleX(1.1901);">−5.0</span>
<span class="t" style="left:1507.89px;top:986.23px;font:normal normal 14.14px/1 'Liberation Sans',sans-serif;color:#000000;transform:scaleX(1.1901);">−2.5</span>
<span class="t" style="left:1575.62px;top:986.23px;font:normal normal 14.14px/1 'Liberation Sans',sans-serif;color:#000000;transform:scaleX(1.1065);">0.0</span>
<span class="t" style="left:1637.62px;top:986.23px;font:normal normal 14.14px/1 'Liberation Sans',sans-serif;color:#000000;transform:scaleX(1.1065);">2.5</span>
<span class="t" style="left:1699.62px;top:986.23px;font:normal normal 14.14px/1 'Liberation Sans',sans-serif;color:#000000;transform:scaleX(1.1065);">5.0</span>
<span class="t" style="left:1761.62px;top:986.23px;font:normal normal 14.14px/1 'Liberation Sans',sans-serif;color:#000000;transform:scaleX(1.1065);">7.5</span>
<span class="t" style="left:1819.27px;top:986.23px;font:normal normal 14.14px/1 'Liberation Sans',sans-serif;color:#000000;transform:scaleX(1.1064);">10.0</span>
<span class="t" style="left:1305.85px;top:953.73px;font:normal normal 14.14px/1 'Liberation Sans',sans-serif;color:#000000;transform:scaleX(1.1065);">0.0</span>
<span class="t" style="left:1305.85px;top:886.53px;font:normal normal 14.14px/1 'Liberation Sans',sans-serif;color:#000000;transform:scaleX(1.1065);">0.2</span>
<span class="t" style="left:1305.85px;top:819.33px;font:normal normal 14.14px/1 'Liberation Sans',sans-serif;color:#000000;transform:scaleX(1.1065);">0.4</span>
<span class="t" style="left:1305.85px;top:752.13px;font:normal normal 14.14px/1 'Liberation Sans',sans-serif;color:#000000;transform:scaleX(1.1065);">0.6</span>
<span class="t" style="left:1305.85px;top:684.93px;font:normal normal 14.14px/1 'Liberation Sans',sans-serif;color:#000000;transform:scaleX(1.1065);">0.8</span>
<span class="t" style="left:1305.85px;top:617.73px;font:normal normal 14.14px/1 'Liberation Sans',sans-serif;color:#000000;transform:scaleX(1.1065);">1.0</span>
<span class="t" style="left:1583.82px;top:1004.83px;font:normal normal 14.14px/1 'Liberation Sans',sans-serif;color:#000000;transform:scaleX(1.3645);">t</span>
<span class="t" style="left:1410.50px;top:628.02px;font:italic normal 19.70px/1 'Liberation Sans',sans-serif;color:#000000;transform:scaleX(1.1169);">σ(t) =</span>
<span class="t" style="left:1487.60px;top:624.26px;font:normal normal 13.40px/1 'Liberation Sans',sans-serif;color:#000000;transform:scaleX(1.1539);">1</span>
<span class="t" style="left:1469.40px;top:643.06px;font:normal normal 13.40px/1 'Liberation Sans',sans-serif;color:#000000;transform:scaleX(1.1539);">1</span>
<span class="t" style="left:1480.00px;top:643.06px;font:normal normal 13.40px/1 'Liberation Sans',sans-serif;color:#000000;transform:scaleX(1.4440);">+</span>
<span class="t" style="left:1494.60px;top:643.06px;font:italic normal 13.40px/1 'Liberation Sans',sans-serif;color:#000000;transform:scaleX(1.1539);">e</span>
<span class="t" style="left:1504.40px;top:640.77px;font:italic normal 9.60px/1 'Liberation Sans',sans-serif;color:#000000;transform:scaleX(1.4505);">−t</span>
<div class="a" style="left:1258px;top:1030px;width:640px;height:46px;background:#d9d9d9"></div><svg style="left:1258px;top:1030px" width="240" height="46" viewBox="0 0 240 46"><use href="#mpltb"/></svg>
<!-- Figure 1 -->
<div class="a" style="left:1228px;top:36px;width:640px;height:552px;background:#fff;box-shadow:0 5px 22px 0 rgba(0,0,0,.42)"></div>
<div class="a" style="left:1228px;top:36px;width:640px;height:26px;background:#797781"></div>
<span class="t" style="left:1510.50px;top:40.22px;font:normal normal 19.00px/1 'Liberation Sans',sans-serif;color:#ffffff;transform:scaleX(0.9827);">Figure 1</span>
<svg style="left:1790px;top:38px" width="76" height="22" viewBox="0 0 76 22"><g stroke="#f4f4f4" stroke-width="3.1" fill="none"><path d="M6.700 7.800l6.200 6.200 6.200-6.200"/><path d="M32.700 14.900l6.200-6.200 6.200 6.200"/><path d="M59 4.600l12.800 12.800M71.800 4.600l-12.800 12.800" stroke-width="3.300"/></g></svg>
<svg style="left:0;top:0" width="1920" height="1080" viewBox="0 0 1920 1080"><polyline points="1330.55,304.40 1332.81,299.10 1335.08,293.80 1337.34,288.51 1339.61,283.24 1341.87,277.99 1344.14,272.76 1346.41,267.57 1348.67,262.41 1350.94,257.30 1353.20,252.23 1355.47,247.22 1357.74,242.26 1360.00,237.36 1362.27,232.53 1364.53,227.78 1366.80,223.09 1369.07,218.49 1371.33,213.98 1373.60,209.55 1375.86,205.22 1378.13,200.99 1380.39,196.86 1382.66,192.84 1384.93,188.93 1387.19,185.14 1389.46,181.46 1391.72,177.91 1393.99,174.48 1396.26,171.18 1398.52,168.02 1400.79,164.99 1403.05,162.10 1405.32,159.35 1407.59,156.75 1409.85,154.29 1412.12,151.98 1414.38,149.83 1416.65,147.83 1418.91,145.98 1421.18,144.30 1423.45,142.77 1425.71,141.40 1427.98,140.20 1430.24,139.16 1432.51,138.29 1434.78,137.58 1437.04,137.03 1439.31,136.66 1441.57,136.45 1443.84,136.41 1446.11,136.53 1448.37,136.82 1450.64,137.28 1452.90,137.91 1455.17,138.70 1457.43,139.66 1459.70,140.78 1461.97,142.07 1464.23,143.51 1466.50,145.12 1468.76,146.89 1471.03,148.81 1473.30,150.89 1475.56,153.12 1477.83,155.50 1480.09,158.03 1482.36,160.71 1484.62,163.53 1486.89,166.49 1489.16,169.58 1491.42,172.82 1493.69,176.18 1495.95,179.67 1498.22,183.29 1500.49,187.02 1502.75,190.87 1505.02,194.84 1507.28,198.91 1509.55,203.10 1511.82,207.38 1514.08,211.75 1516.35,216.22 1518.61,220.78 1520.88,225.42 1523.14,230.15 1525.41,234.94 1527.68,239.80 1529.94,244.73 1532.21,249.72 1534.47,254.76 1536.74,259.85 1539.01,264.99 1541.27,270.16 1543.54,275.37 1545.80,280.61 1548.07,285.87 1550.34,291.15 1552.60,296.45 1554.87,301.75 1557.13,307.05 1559.40,312.35 1561.66,317.65 1563.93,322.93 1566.20,328.19 1568.46,333.43 1570.73,338.64 1572.99,343.81 1575.26,348.95 1577.53,354.04 1579.79,359.08 1582.06,364.07 1584.32,369.00 1586.59,373.86 1588.86,378.65 1591.12,383.38 1593.39,388.02 1595.65,392.58 1597.92,397.05 1600.18,401.42 1602.45,405.70 1604.72,409.89 1606.98,413.96 1609.25,417.93 1611.51,421.78 1613.78,425.51 1616.05,429.13 1618.31,432.62 1620.58,435.98 1622.84,439.22 1625.11,442.31 1627.38,445.27 1629.64,448.09 1631.91,450.77 1634.17,453.30 1636.44,455.68 1638.70,457.91 1640.97,459.99 1643.24,461.91 1645.50,463.68 1647.77,465.29 1650.03,466.73 1652.30,468.02 1654.57,469.14 1656.83,470.10 1659.10,470.89 1661.36,471.52 1663.63,471.98 1665.89,472.27 1668.16,472.39 1670.43,472.35 1672.69,472.14 1674.96,471.77 1677.22,471.22 1679.49,470.51 1681.76,469.64 1684.02,468.60 1686.29,467.40 1688.55,466.03 1690.82,464.50 1693.09,462.82 1695.35,460.97 1697.62,458.97 1699.88,456.82 1702.15,454.51 1704.41,452.05 1706.68,449.45 1708.95,446.70 1711.21,443.81 1713.48,440.78 1715.74,437.62 1718.01,434.32 1720.28,430.89 1722.54,427.34 1724.81,423.66 1727.07,419.87 1729.34,415.96 1731.61,411.94 1733.87,407.81 1736.14,403.58 1738.40,399.25 1740.67,394.82 1742.93,390.31 1745.20,385.71 1747.47,381.02 1749.73,376.27 1752.00,371.44 1754.26,366.54 1756.53,361.58 1758.80,356.57 1761.06,351.50 1763.33,346.39 1765.59,341.23 1767.86,336.04 1770.13,330.81 1772.39,325.56 1774.66,320.29 1776.92,315.00 1779.19,309.70 1781.45,304.40" stroke="#1f77b4" stroke-width="2.08" fill="none" stroke-linejoin="round"/><path d="M1331.50 489.50v4.86M1402.50 489.50v4.86M1474.50 489.50v4.86M1546.50 489.50v4.86M1618.50 489.50v4.86M1689.50 489.50v4.86M1761.50 489.50v4.86M1308.50 472.50h-4.86M1308.50 430.50h-4.86M1308.50 388.50h-4.86M1308.50 346.50h-4.86M1308.50 304.50h-4.86M1308.50 262.50h-4.86M1308.50 220.50h-4.86M1308.50 178.50h-4.86M1308.50 136.50h-4.86" stroke="#000" stroke-width="1.11" fill="none"/><rect x="1308.50" y="120.50" width="496.00" height="369.00" fill="none" stroke="#000" stroke-width="1.11"/></svg>
<span class="t" style="left:1326.70px;top:498.23px;font:normal normal 14.14px/1 'Liberation Sans',sans-serif;color:#000000;transform:scaleX(1.1063);">0</span>
<span class="t" style="left:1398.46px;top:498.23px;font:normal normal 14.14px/1 'Liberation Sans',sans-serif;color:#000000;transform:scaleX(1.1063);">1</span>
<span class="t" style="left:1470.22px;top:498.23px;font:normal normal 14.14px/1 'Liberation Sans',sans-serif;color:#000000;transform:scaleX(1.1063);">2</span>
<span class="t" style="left:1541.99px;top:498.23px;font:normal normal 14.14px/1 'Liberation Sans',sans-serif;color:#000000;transform:scaleX(1.1063);">3</span>
<span class="t" style="left:1613.75px;top:498.23px;font:normal normal 14.14px/1 'Liberation Sans',sans-serif;color:#000000;transform:scaleX(1.1063);">4</span>
<span class="t" style="left:1685.52px;top:498.23px;font:normal normal 14.14px/1 'Liberation Sans',sans-serif;color:#000000;transform:scaleX(1.1063);">5</span>
<span class="t" style="left:1757.28px;top:498.23px;font:normal normal 14.14px/1 'Liberation Sans',sans-serif;color:#000000;transform:scaleX(1.1063);">6</span>
<span class="t" style="left:1255.68px;top:465.73px;font:normal normal 14.14px/1 'Liberation Sans',sans-serif;color:#000000;transform:scaleX(1.1716);">−1.00</span>
<span class="t" style="left:1255.68px;top:423.73px;font:normal normal 14.14px/1 'Liberation Sans',sans-serif;color:#000000;transform:scaleX(1.1716);">−0.75</span>
<span class="t" style="left:1255.68px;top:381.73px;font:normal normal 14.14px/1 'Liberation Sans',sans-serif;color:#000000;transform:scaleX(1.1716);">−0.50</span>
<span class="t" style="left:1255.68px;top:339.73px;font:normal normal 14.14px/1 'Liberation Sans',sans-serif;color:#000000;transform:scaleX(1.1716);">−0.25</span>
<span class="t" style="left:1267.15px;top:297.73px;font:normal normal 14.14px/1 'Liberation Sans',sans-serif;color:#000000;transform:scaleX(1.1064);">0.00</span>
<span class="t" style="left:1267.15px;top:255.73px;font:normal normal 14.14px/1 'Liberation Sans',sans-serif;color:#000000;transform:scaleX(1.1064);">0.25</span>
<span class="t" style="left:1267.15px;top:213.73px;font:normal normal 14.14px/1 'Liberation Sans',sans-serif;color:#000000;transform:scaleX(1.1064);">0.50</span>
<span class="t" style="left:1267.15px;top:171.73px;font:normal normal 14.14px/1 'Liberation Sans',sans-serif;color:#000000;transform:scaleX(1.1064);">0.75</span>
<span class="t" style="left:1267.15px;top:129.73px;font:normal normal 14.14px/1 'Liberation Sans',sans-serif;color:#000000;transform:scaleX(1.1064);">1.00</span>
<div class="a" style="left:1228px;top:542px;width:640px;height:46px;background:#d9d9d9"></div><svg style="left:1228px;top:542px" width="240" height="46" viewBox="0 0 240 46"><use href="#mpltb"/></svg>
<!-- taskbar -->
<div id="tb" class="a"></div>
<div class="a" style="left:1439px;top:0;width:181px;height:36px;background:linear-gradient(180deg,#565759,#4d4e50)"></div>
<svg style="left:0;top:0" width="1920" height="36" viewBox="0 0 1920 36">
 <use href="#i-rpi" x="5" y="-0.100"/>
 <use href="#i-ff" x="53.800" y="2"/>
 <use href="#i-term" x="91" y="5.400"/>
 <use href="#i-fold" x="128.800" y="5"/>
 <use href="#i-term" x="175.200" y="5.400"/>
 <use href="#i-ff" x="356.500" y="2"/>
 <use href="#i-lamp" x="537" y="2"/>
 <use href="#i-term" x="718.800" y="5.400"/>
 <use href="#i-doc" x="903.800" y="1.900"/>
 <use href="#i-fold" x="1079.800" y="5"/>
 <use href="#i-term" x="1261" y="5.400"/>
 <use href="#i-doc" x="1446.800" y="1.900"/>
 <use href="#i-tray"/>
</svg>
<span class="t" style="left:212.00px;top:7.32px;font:normal normal 21.00px/1 'Liberation Sans',sans-serif;color:#e2e2e2;transform:scaleX(0.9238);">mc -a</span>
<span class="t" style="left:393.50px;top:7.32px;font:normal normal 21.00px/1 'Liberation Sans',sans-serif;color:#e2e2e2;transform:scaleX(0.8695);">Radio_Azureus..</span>
<span class="t" style="left:574.00px;top:7.32px;font:normal normal 21.00px/1 'Liberation Sans',sans-serif;color:#e2e2e2;transform:scaleX(0.8962);">matplotlib_lolo...</span>
<span class="t" style="left:755.50px;top:7.32px;font:normal normal 21.00px/1 'Liberation Sans',sans-serif;color:#e2e2e2;transform:scaleX(0.8760);">geany_run_scri..</span>
<span class="t" style="left:937.00px;top:7.32px;font:normal normal 21.00px/1 'Liberation Sans',sans-serif;color:#e2e2e2;transform:scaleX(0.8437);">Figure 1</span>
<span class="t" style="left:1118.00px;top:7.32px;font:normal normal 21.00px/1 'Liberation Sans',sans-serif;color:#e2e2e2;transform:scaleX(0.8898);">Pictures</span>
<span class="t" style="left:1298.50px;top:7.32px;font:normal normal 21.00px/1 'Liberation Sans',sans-serif;color:#e2e2e2;transform:scaleX(0.8760);">geany_run_scri..</span>
<span class="t" style="left:1480.00px;top:7.32px;font:normal normal 21.00px/1 'Liberation Sans',sans-serif;color:#e2e2e2;transform:scaleX(0.8437);">Figure 1</span>
<span class="t" style="left:1861.50px;top:7.32px;font:normal normal 21.00px/1 'Liberation Sans',sans-serif;color:#e2e2e2;transform:scaleX(0.9217);">11:30</span>
</div></body></html>
